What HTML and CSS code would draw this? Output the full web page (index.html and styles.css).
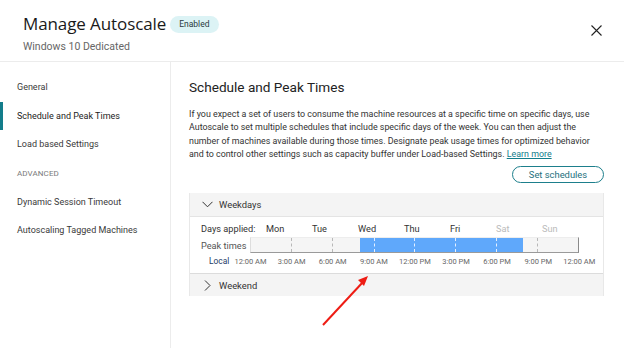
FILE: index.html
```html
<!DOCTYPE html>
<html>
<head>
<meta charset="utf-8">
<link rel="stylesheet" href="styles.css">
</head>
<body>
<div class="dialog">
  <header class="head">
    <div class="head-text">
      <div class="title-row">
        <h1 class="title">Manage Autoscale</h1>
        <span class="badge">Enabled</span>
      </div>
      <div class="subtitle">Windows 10 Dedicated</div>
    </div>
    <button class="close" aria-label="Close">
      <svg width="11" height="11" viewBox="0 0 11 11"><path d="M0.5 0.5 L10.5 10.5 M10.5 0.5 L0.5 10.5" stroke="#222" stroke-width="1.1" fill="none"/></svg>
    </button>
  </header>
  <div class="body">
    <nav class="nav">
      <div class="nav-item">General</div>
      <div class="nav-item active">Schedule and Peak Times</div>
      <div class="nav-item">Load based Settings</div>
      <div class="nav-group">ADVANCED</div>
      <div class="nav-item">Dynamic Session Timeout</div>
      <div class="nav-item">Autoscaling Tagged Machines</div>
    </nav>
    <main class="main">
      <h2 class="heading">Schedule and Peak Times</h2>
      <p class="desc">If you expect a set of users to consume the machine resources at a specific time on specific days, use Autoscale to set multiple schedules that include specific days of the week. You can then adjust the number of machines available during those times. Designate peak usage times for optimized behavior and to control other settings such as capacity buffer under Load-based Settings. <a class="link" href="#">Learn more</a></p>
      <div class="actions">
        <button class="btn">Set schedules</button>
      </div>
      <section class="panel">
        <div class="panel-head">
          <svg class="chev" width="11" height="7" viewBox="0 0 11 7"><path d="M0.5 0.8 L5.5 5.8 L10.5 0.8" stroke="#333" stroke-width="1" fill="none"/></svg>
          <span>Weekdays</span>
        </div>
        <div class="panel-body">
          <div class="row days">
            <span class="lbl lbl-days">Days applied:</span>
            <span class="day">Mon</span>
            <span class="day">Tue</span>
            <span class="day">Wed</span>
            <span class="day">Thu</span>
            <span class="day">Fri</span>
            <span class="day off">Sat</span>
            <span class="day off">Sun</span>
          </div>
          <div class="row peak">
            <span class="lbl lbl-peak">Peak times</span>
            <div class="bar">
              <div class="seg"></div><div class="seg"></div><div class="seg"></div><div class="seg"></div>
              <div class="seg"></div><div class="seg"></div><div class="seg"></div><div class="seg last"></div>
              <div class="fill" style="left:33.333%;width:50%">
                <i class="tick" style="left:8.333%"></i>
                <i class="tick" style="left:33.333%"></i>
                <i class="tick" style="left:58.333%"></i>
                <i class="tick" style="left:83.333%"></i>
              </div>
            </div>
          </div>
          <div class="row times">
            <span class="local">Local</span>
            <span class="t">12:00 AM</span>
            <span class="t">3:00 AM</span>
            <span class="t">6:00 AM</span>
            <span class="t">9:00 AM</span>
            <span class="t">12:00 PM</span>
            <span class="t">3:00 PM</span>
            <span class="t">6:00 PM</span>
            <span class="t">9:00 PM</span>
            <span class="t">12:00 AM</span>
          </div>
        </div>
        <div class="panel-head bottom">
          <svg class="chev" width="11" height="11" viewBox="0 0 11 11"><path d="M3 0.5 L8 5.5 L3 10.5" stroke="#333" stroke-width="1" fill="none"/></svg>
          <span>Weekend</span>
        </div>
      </section>
    </main>
  </div>
  <svg class="arrow" width="60" height="60" viewBox="0 0 60 60">
    <path d="M6 56 L46 13" stroke="#ee1c14" stroke-width="2" fill="none"/>
    <path d="M51 7 L41 11 L47 17 Z" fill="#ee1c14"/>
  </svg>
</div>
</body>
</html>
```

FILE: styles.css
```css
* { box-sizing: border-box; }
html, body { margin: 0; padding: 0; background: #fff; }
body {
  width: 624px; height: 348px; overflow: hidden;
  font-family: Roboto, "Liberation Sans", sans-serif;
  color: #333;
}
.dialog { position: relative; height: 348px; display: flex; flex-direction: column; }
.head {
  height: 62px; flex: none;
  border-bottom: 1px solid #ececec;
  display: flex; align-items: flex-start; justify-content: space-between;
  padding: 12px 22px 0 23px;
}
.title-row { display: flex; align-items: center; gap: 4px; }
.title {
  margin: 0; font-family: "Open Sans", sans-serif; font-weight: 500;
  font-size: 17px; color: #1a1a1a; line-height: 24px; letter-spacing: -0.1px;
}
.badge {
  background: #dcf3f5; color: #2a3a40; font-size: 8.5px;
  border-radius: 9px; padding: 0 9px; height: 17px; line-height: 17px;
}
.subtitle { margin-top: 4px; font-size: 10.5px; color: #666; }
.close {
  border: 0; background: none; padding: 0; margin-top: 13px; width: 11px; height: 11px;
  display: block;
}
.close svg { display: block; }
.body { flex: 1; display: flex; min-height: 0; }
.nav {
  width: 171px; flex: none; border-right: 1px solid #ececec;
  padding-top: 11px;
}
.nav-item, .nav-group {
  height: 28.6px; display: flex; align-items: center; padding-left: 17px;
  font-size: 9px; color: #3a3a3a; position: relative;
}
.nav-item.active { color: #1c1c1c; }
.nav-item.active::before {
  content: ""; position: absolute; left: 0; top: 0; bottom: 0; width: 3px; background: #137d8b;
}
.nav-group { font-size: 8px; color: #7a7a7a; letter-spacing: 0.1px; }
.main { flex: 1; padding: 16px 20px 0 18px; }
.heading {
  margin: 0; font-family: Roboto, sans-serif; font-weight: 400; font-size: 13.6px;
  color: #222; line-height: 18px;
}
.desc {
  margin: 12px 0 0; font-family: Roboto, sans-serif; font-size: 8.9px; line-height: 13.3px; color: #333;
}
.link { color: #137d8b; text-decoration: underline; }
.actions { display: flex; justify-content: flex-end; margin-top: 5px; }
.btn {
  width: 92px; height: 17px; border: 1.5px solid #1d7f8c; border-radius: 9px;
  background: #fff; color: #1d6f7c; font-family: Roboto, sans-serif; font-size: 9.4px; padding: 0; line-height: 14px;
}
.panel {
  margin-top: 10px; border-left: 1px solid #e8e8e8; border-right: 1px solid #e8e8e8;
}
.panel-head {
  height: 24px; background: #f4f4f4; display: flex; align-items: center;
  padding-left: 12px; font-size: 9.4px; color: #333; gap: 6px;
  border-bottom: 1px solid #e4e4e4;
}
.panel-head.bottom { border-bottom: 0; border-top: 1.5px solid #dcdcdc; height: 23px; gap: 6px; padding-left: 12px; }
.chev { display: block; flex: none; }
.panel-body { padding: 6px 0 6px 11px; }
.row { display: flex; align-items: center; }
.lbl { font-size: 9.2px; color: #333; flex: none; }
.lbl-days { width: 65px; }
.day { width: 46px; font-size: 9.2px; color: #333; }
.day.off { color: #bbb; }
.peak { margin-top: 3px; }
.lbl-peak { width: 49px; color: #555; }
.bar {
  position: relative; width: 329px; height: 16px; display: flex;
  background: #f5f5f5; border-top: 1px solid #ededed; border-left: 1px solid #ddd; border-bottom: 1px solid #9a9a9a; border-right: 1px solid #8a8a8a;
}
.seg { flex: 1; border-right: 1px dashed #b8b8b8; }
.seg.last { border-right: 0; }
.fill { position: absolute; top: 0; bottom: 0; background: #5fa8fb; }
.tick { position: absolute; top: 0; bottom: 0; border-left: 1px dashed #e6f0ff; }
.times { margin-top: 2px; height: 12px; }
.local { width: 21px; margin-left: 8px; font-size: 8.4px; color: #1d3c66; flex: none; }
.t { width: 41.1px; text-align: center; font-size: 7.5px; color: #666; flex: none; white-space: nowrap; }
.arrow { position: absolute; left: 317px; top: 269px; }
```
